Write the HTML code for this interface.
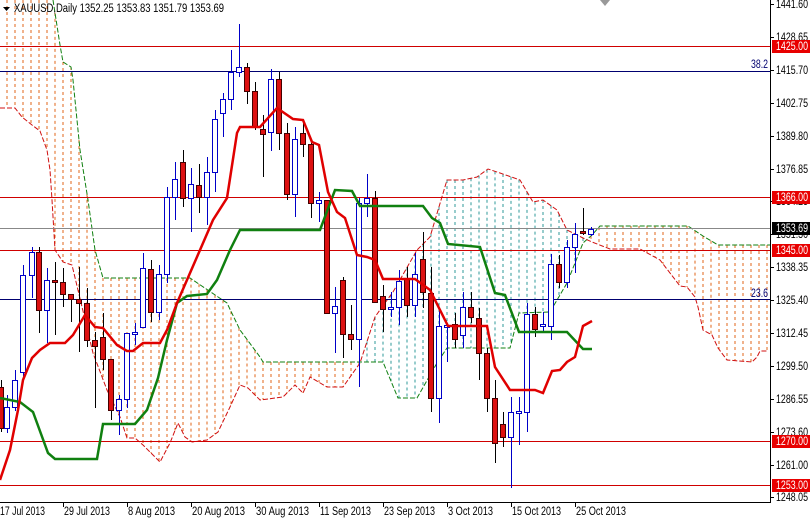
<!DOCTYPE html>
<html><head><meta charset="utf-8"><style>
html,body{margin:0;padding:0;background:#fff;width:810px;height:519px;overflow:hidden}
svg{display:block}
text{font-family:"Liberation Sans",sans-serif;font-size:11.5px}
</style></head><body>
<svg id="c" width="810" height="519" xmlns="http://www.w3.org/2000/svg"></svg>
<script>
var S=[];
function P(a){return a.map(function(p){return p[0]+','+p[1]}).join(' ')}
function interp(pl,x){if(x<pl[0][0])return null;for(var i=1;i<pl.length;i++){if(x<=pl[i][0]){var a=pl[i-1],b=pl[i];return a[1]+(b[1]-a[1])*(x-a[0])/((b[0]-a[0])||1)}}return null}
var G=[[53,0],[60,45],[63,62],[71,67],[73,80],[80,150],[88,200],[95,250],[103,278],[190,278],[227,303],[240,330],[260,357],[263,362],[383,362],[398,398],[417,398],[437,363],[447,348],[510,348],[519,313],[550,312],[567,283],[583,243],[592,235],[600,226],[688,226],[703,236],[718,245],[770,245]];
var R=[[0,108],[15,108],[22,117],[32,125],[40,131],[47,150],[50,170],[52,200],[55,250],[63,262],[72,265],[93,353],[107,390],[120,417],[127,438],[135,438],[143,445],[160,462],[170,443],[178,423],[185,437],[192,442],[207,440],[218,432],[230,407],[240,385],[248,388],[260,400],[283,397],[295,385],[303,393],[310,377],[327,387],[343,387],[360,363],[375,317],[382,307],[393,292],[417,250],[430,237],[447,180],[463,180],[477,177],[488,169],[500,173],[520,180],[533,202],[543,200],[557,210],[567,230],[583,238],[592,242],[610,249],[640,249],[660,260],[680,286],[687,287],[695,297],[698,307],[703,330],[712,335],[718,348],[727,360],[752,362],[757,357],[760,351],[767,351]];
for(var x=7;x<770;x+=8){var g=interp(G,x);if(g===null)g=0;var r=interp(R,x);if(r===null)continue;
var y1=Math.min(g,r),y2=Math.max(g,r);var col=g<r?'#e0661a':'#2f9a9a';
S.push('<line x1="'+x+'" y1="'+y1+'" x2="'+x+'" y2="'+y2+'" stroke="'+col+'" stroke-width="1" stroke-dasharray="3,3"/>');}
S.push('<polyline points="'+P(G)+'" fill="none" stroke="#108010" stroke-width="1" stroke-dasharray="5,2"/>');
S.push('<polyline points="'+P(R)+'" fill="none" stroke="#d01010" stroke-width="1" stroke-dasharray="5,2"/>');
[[46,'#d00000'],[197,'#d00000'],[250,'#d00000'],[441,'#d00000'],[485,'#d00000'],[71,'#000070'],[299,'#000070'],[228,'#888']].forEach(function(h){S.push('<line x1="0" y1="'+(h[0]+.5)+'" x2="770" y2="'+(h[0]+.5)+'" stroke="'+h[1]+'"/>')});
S.push('<text x="751" y="68" fill="#000070" textLength="17" lengthAdjust="spacingAndGlyphs">38.2</text><text x="751" y="297" fill="#000070" textLength="17" lengthAdjust="spacingAndGlyphs">23.6</text>');
var T=[[0,480],[10,450],[18,410],[23,380],[32,358],[40,350],[50,343],[65,343],[73,335],[85,315],[95,327],[103,328],[117,345],[127,351],[133,351],[143,343],[160,343],[167,330],[177,303],[200,250],[213,220],[227,198],[237,133],[240,127],[260,127],[277,108],[293,119],[303,120],[312,142],[319,145],[328,192],[337,212],[345,218],[357,255],[367,257],[375,260],[383,279],[415,279],[430,290],[440,310],[448,326],[487,326],[495,367],[510,390],[535,390],[543,393],[552,371],[560,370],[567,362],[575,357],[583,326],[592,321]];
var K=[[0,398],[20,402],[33,412],[48,453],[55,459],[97,459],[103,424],[135,424],[147,410],[158,378],[167,340],[177,303],[187,296],[207,294],[217,280],[230,250],[240,230],[320,230],[335,190],[352,191],[360,206],[423,206],[432,218],[440,223],[448,244],[480,247],[495,293],[505,295],[519,332],[567,332],[583,349],[592,349]];
var C=[[1,387,428,380,432,'r'],[7,407,428,395,433,'b'],[15,380,407,370,411,'b'],[23,275,372,265,377,'b'],[32,252,275,247,298,'b'],[39,252,310,247,333,'r'],[47,280,310,268,343,'b'],[55,280,282,262,335,'r'],[63,282,294,268,307,'r'],[71,294,299,294,322,'r'],[79,299,303,267,352,'r'],[87,303,340,288,347,'r'],[95,340,346,332,408,'r'],[103,337,359,313,370,'r'],[111,359,410,359,420,'r'],[119,399,410,395,435,'b'],[127,333,399,333,408,'b'],[135,332,334,323,345,'b'],[143,268,327,253,328,'b'],[151,269,312,260,322,'r'],[159,274,312,265,320,'b'],[167,197,274,187,283,'b'],[175,179,197,162,220,'b'],[183,162,198,150,207,'r'],[191,184,198,168,232,'b'],[199,185,197,164,213,'r'],[207,172,197,157,225,'b'],[215,119,172,110,192,'b'],[223,99,113,93,137,'b'],[231,72,99,50,110,'b'],[239,67,72,24,77,'b'],[247,67,91,63,104,'r'],[255,91,126,82,130,'r'],[263,129,134,115,177,'r'],[271,79,132,69,151,'b'],[279,79,133,72,150,'r'],[287,133,194,123,200,'r'],[295,139,194,127,217,'b'],[303,133,144,123,157,'r'],[311,144,203,140,218,'r'],[319,200,203,192,222,'b'],[327,200,313,200,313,'r'],[335,306,313,287,353,'b'],[343,280,334,277,358,'r'],[351,334,339,305,350,'r'],[359,203,339,198,387,'b'],[367,198,203,174,217,'b'],[375,198,302,191,303,'r'],[383,296,309,285,332,'r'],[391,307,309,292,317,'b'],[399,281,307,270,325,'b'],[407,278,305,267,317,'r'],[415,274,305,253,317,'b'],[423,259,292,232,308,'r'],[431,293,398,267,412,'r'],[439,326,398,310,423,'b'],[447,325,327,323,362,'b'],[455,324,339,313,348,'r'],[463,307,335,292,348,'b'],[471,307,317,292,323,'r'],[479,318,353,308,380,'r'],[487,353,398,348,412,'r'],[495,398,443,380,463,'r'],[503,424,437,412,447,'r'],[511,412,437,397,488,'b'],[519,411,413,397,445,'b'],[527,314,412,303,432,'b'],[535,314,329,307,337,'r'],[543,324,326,312,332,'b'],[551,264,326,254,340,'b'],[559,264,282,255,288,'r'],[567,247,282,240,288,'b'],[575,234,247,223,273,'b'],[583,231,233,208,235,'r'],[591,229,234,227,236,'b']];
C.forEach(function(c){var x=c[0]+.5,bull=c[5]=='b';var w=bull?'#0000c8':'#000';
S.push('<line x1="'+x+'" y1="'+c[3]+'" x2="'+x+'" y2="'+c[4]+'" stroke="'+w+'"/>');
var h=Math.max(c[2]-c[1],1);
if(bull)S.push('<rect x="'+(c[0]-2.5)+'" y="'+(c[1]+.5)+'" width="5" height="'+h+'" fill="#fff" stroke="#0000c8"/>');
else S.push('<rect x="'+(c[0]-2.5)+'" y="'+(c[1]+.5)+'" width="5" height="'+h+'" fill="#dd1010" stroke="#400"/>');});
S.push('<polyline points="'+P(K)+'" fill="none" stroke="#108010" stroke-width="2.5"/>');
S.push('<polyline points="'+P(T)+'" fill="none" stroke="#e00000" stroke-width="2.5"/>');
S.push('<line x1="770.5" y1="0" x2="770.5" y2="503" stroke="#000"/><line x1="0" y1="502.5" x2="771" y2="502.5" stroke="#000"/>');
var L=[[4,'1441.60'],[37,'1428.65'],[70,'1415.70'],[103,'1402.75'],[136,'1389.80'],[169,'1376.85'],[201,'1364.25'],[234,'1351.30'],[267,'1338.35'],[300,'1325.40'],[333,'1312.45'],[366,'1299.50'],[399,'1286.55'],[432,'1273.60'],[465,'1261.00'],[497,'1248.05']];
L.forEach(function(l){S.push('<line x1="770" y1="'+(l[0]+.5)+'" x2="774" y2="'+(l[0]+.5)+'" stroke="#000"/><text x="776" y="'+(l[0]+4)+'" fill="#000" textLength="32" lengthAdjust="spacingAndGlyphs">'+l[1]+'</text>')});
[[46,'1425.00','#e80000'],[197,'1366.00','#e80000'],[250,'1345.00','#e80000'],[441,'1270.00','#e80000'],[485,'1253.00','#e80000'],[228,'1353.69','#000']].forEach(function(b){
S.push('<rect x="772" y="'+(b[0]-6)+'" width="38" height="13" fill="'+b[2]+'"/><text x="776" y="'+(b[0]+4)+'" fill="#fff" textLength="32" lengthAdjust="spacingAndGlyphs">'+b[1]+'</text>')});
var D=[[0,'17 Jul 2013',45],[63,'29 Jul 2013',46],[127,'8 Aug 2013',47],[191,'20 Aug 2013',53],[255,'30 Aug 2013',53],[319,'11 Sep 2013',51],[383,'23 Sep 2013',51],[447,'3 Oct 2013',45],[511,'15 Oct 2013',49],[575,'25 Oct 2013',50]];
D.forEach(function(d,i){if(i>0)S.push('<line x1="'+(d[0]+.5)+'" y1="502" x2="'+(d[0]+.5)+'" y2="507" stroke="#000"/>');S.push('<text x="'+(i?d[0]+1:0)+'" y="515" fill="#000" textLength="'+d[2]+'" lengthAdjust="spacingAndGlyphs">'+d[1]+'</text>')});
S.push('<polygon points="3,7 10,7 6.5,11" fill="#000"/><text x="14" y="12" fill="#000" textLength="210" lengthAdjust="spacingAndGlyphs">XAUUSD,Daily  1352.25 1353.83 1351.79 1353.69</text>');
S.push('<polygon points="600,0 610,0 605,6" fill="#999"/>');
document.getElementById('c').innerHTML=S.join('');
</script>
</body></html>
